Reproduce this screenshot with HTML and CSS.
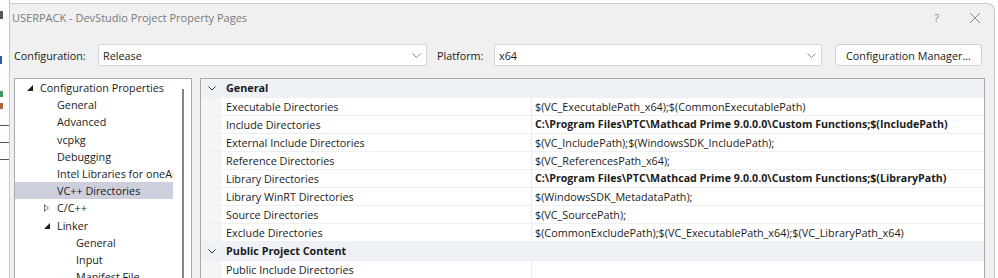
FILE: index.html
```html
<!DOCTYPE html>
<html lang="en">
<head>
    <meta charset="UTF-8">
    <title>USERPACK - DevStudio Project Property Pages</title>
    <link rel="stylesheet" href="styles.css">
</head>
<body>
<div class="desk">

    <div class="editor-strip">
        <span class="frag frag-dark"></span>
        <span class="frag frag-blue"></span>
        <span class="frag frag-green"></span>
        <span class="frag frag-brown"></span>
        <span class="frag-line"></span>
        <span class="frag-line"></span>
        <span class="frag-line"></span>
    </div>

    <div class="dialog">
        <div class="titlebar">
            <span class="title">USERPACK - DevStudio Project Property Pages</span>
            <span class="help-btn">?</span>
            <svg class="close-btn" width="12" height="12" viewBox="0 0 12 12"><path d="M1 1L11 11M11 1L1 11" stroke="#8a8a8a" stroke-width="1"/></svg>
        </div>

        <div class="config-row">
            <span class="cfg-label">Configuration:</span>
            <div class="combo combo-config">
                <span>Release</span>
                <svg width="9" height="5" viewBox="0 0 9 5"><path d="M0.5 0.5L4.5 4.5L8.5 0.5" fill="none" stroke="#8c8c8c"/></svg>
            </div>
            <span class="cfg-label platform-label">Platform:</span>
            <div class="combo combo-platform">
                <span>x64</span>
                <svg width="9" height="5" viewBox="0 0 9 5"><path d="M0.5 0.5L4.5 4.5L8.5 0.5" fill="none" stroke="#8c8c8c"/></svg>
            </div>
            <button class="cfg-manager">Configuration Manager...</button>
        </div>

        <div class="panes">
            <div class="tree">
                <div class="tree-list">
                    <div class="node lvl0"><span class="exp open"></span>Configuration Properties</div>
                    <div class="node lvl1">General</div>
                    <div class="node lvl1">Advanced</div>
                    <div class="node lvl1">vcpkg</div>
                    <div class="node lvl1">Debugging</div>
                    <div class="node lvl1">Intel Libraries for oneAPI</div>
                    <div class="node lvl1 selected">VC++ Directories</div>
                    <div class="node lvl1 has-exp"><span class="exp closed"></span>C/C++</div>
                    <div class="node lvl1 has-exp"><span class="exp open"></span>Linker</div>
                    <div class="node lvl2">General</div>
                    <div class="node lvl2">Input</div>
                    <div class="node lvl2">Manifest File</div>
                </div>
                <div class="tree-scroll"><div class="thumb"></div></div>
            </div>

            <div class="grid">
                <div class="row cat">
                    <span class="gutter"><svg width="8" height="5" viewBox="0 0 8 5"><path d="M0.5 0.5L4 4L7.5 0.5" fill="none" stroke="#333"/></svg></span>
                    <span class="name">General</span>
                </div>
                <div class="row"><span class="gutter"></span><span class="name">Executable Directories</span><span class="value">$(VC_ExecutablePath_x64);$(CommonExecutablePath)</span></div>
                <div class="row"><span class="gutter"></span><span class="name">Include Directories</span><span class="value bold">C:\Program Files\PTC\Mathcad Prime 9.0.0.0\Custom Functions;$(IncludePath)</span></div>
                <div class="row"><span class="gutter"></span><span class="name">External Include Directories</span><span class="value">$(VC_IncludePath);$(WindowsSDK_IncludePath);</span></div>
                <div class="row"><span class="gutter"></span><span class="name">Reference Directories</span><span class="value">$(VC_ReferencesPath_x64);</span></div>
                <div class="row"><span class="gutter"></span><span class="name">Library Directories</span><span class="value bold">C:\Program Files\PTC\Mathcad Prime 9.0.0.0\Custom Functions;$(LibraryPath)</span></div>
                <div class="row"><span class="gutter"></span><span class="name">Library WinRT Directories</span><span class="value">$(WindowsSDK_MetadataPath);</span></div>
                <div class="row"><span class="gutter"></span><span class="name">Source Directories</span><span class="value">$(VC_SourcePath);</span></div>
                <div class="row"><span class="gutter"></span><span class="name">Exclude Directories</span><span class="value">$(CommonExcludePath);$(VC_ExecutablePath_x64);$(VC_LibraryPath_x64)</span></div>
                <div class="row cat">
                    <span class="gutter"><svg width="8" height="5" viewBox="0 0 8 5"><path d="M0.5 0.5L4 4L7.5 0.5" fill="none" stroke="#333"/></svg></span>
                    <span class="name">Public Project Content</span>
                </div>
                <div class="row"><span class="gutter"></span><span class="name">Public Include Directories</span><span class="value"></span></div>
            </div>
        </div>
    </div>

</div>
</body>
</html>
```
FILE: styles.css
```css
*{
    box-sizing: border-box;
}
body{
    margin: 0;
    background: #ffffff;
    font-family: "Open Sans", "Noto Sans", sans-serif;
    font-size: 10.8px;
    color: #1b1b1b;
    overflow: hidden;
}
.desk{
    display: flex;
    height: 278px;
}

/* bit of the editor behind the dialog */
.editor-strip{
    width: 10px;
    flex: none;
    display: flex;
    flex-direction: column;
    background: #fdfdfd;
    overflow: hidden;
    border-right: 1px solid #c9c9c9;
}
.frag{
    display: block;
    width: 3px;
    height: 8px;
}
.frag-dark{ background: #555; margin-top: 11px; }
.frag-blue{ background: #2b5aa8; margin-top: 37px; width: 2px; }
.frag-green{ background: #3d9a63; margin-top: 27px; height: 6px; }
.frag-brown{ background: #a8683a; margin-top: 6px; height: 6px; }
.frag-line{
    display: block;
    height: 1px;
    width: 9px;
    background: #555;
    margin-top: 16px;
}

.dialog{
    flex: 1;
    margin-top: 3px;
    margin-right: 3px;
    background: #f0f0f0;
    border-top: 1px solid #c9c9c9;
    border-right: 1px solid #c9c9c9;
    border-top-right-radius: 8px;
    display: flex;
    flex-direction: column;
    overflow: hidden;
}

.titlebar{
    display: flex;
    align-items: center;
    height: 27px;
    padding: 0 0 0 2px;
    flex: none;
}
.title{
    flex: 1;
    color: #7a7a7a;
    font-size: 11px;
}
.help-btn{
    color: #8a8a8a;
    font-size: 11px;
    margin-right: 30px;
}
.close-btn{
    margin-right: 13px;
}

.config-row{
    display: flex;
    align-items: center;
    height: 22px;
    margin-top: 13px;
    padding-left: 4px;
    flex: none;
}
.cfg-label{
    width: 84px;
    flex: none;
}
.platform-label{
    width: 57px;
    margin-left: 10px;
}
.combo{
    height: 22px;
    background: #ffffff;
    border: 1px solid #d6d6d6;
    display: flex;
    align-items: center;
    justify-content: space-between;
    padding: 0 5px 0 4px;
    flex: none;
}
.combo svg{
    margin-top: 1px;
}
.combo-config{
    width: 329px;
}
.combo-platform{
    width: 328px;
}
.cfg-manager{
    margin-left: 13px;
    width: 147px;
    height: 22px;
    background: #fdfdfd;
    border: 1px solid #d0d0d0;
    border-radius: 4px;
    font: inherit;
    color: #1b1b1b;
    padding: 0;
}

.panes{
    display: flex;
    margin-top: 12px;
    flex: 1;
    min-height: 0;
    padding-left: 4px;
}

.tree{
    width: 178px;
    flex: none;
    background: #ffffff;
    border: 1px solid #a9a9a9;
    border-bottom: none;
    display: flex;
}
.tree-list{
    flex: 1;
    overflow: hidden;
}
.node{
    height: 17.2px;
    line-height: 17.2px;
    white-space: nowrap;
    position: relative;
}
.lvl0{ padding-left: 25px; }
.lvl1{ padding-left: 42px; }
.lvl2{ padding-left: 61px; }
.node.selected{
    background: #cdd0dc;
}
.exp{
    position: absolute;
    top: 6px;
}
.lvl0 .exp{ left: 12px; }
.lvl1 .exp{ left: 29px; }
.exp.open{
    width: 0;
    height: 0;
    border-left: 6px solid transparent;
    border-bottom: 6px solid #1e1e1e;
}
.exp.closed{
    top: 5px;
    width: 0;
    height: 0;
    border-top: 4px solid transparent;
    border-bottom: 4px solid transparent;
    border-left: 5px solid #6e6e6e;
}
.exp.closed::after{
    content: "";
    position: absolute;
    left: -4px;
    top: -2.6px;
    border-top: 2.6px solid transparent;
    border-bottom: 2.6px solid transparent;
    border-left: 3.2px solid #ffffff;
}
.tree-scroll{
    width: 18px;
    flex: none;
    display: flex;
    justify-content: center;
    padding-top: 10px;
}
.thumb{
    width: 2px;
    height: 100%;
    background: #858585;
    margin-left: 2px;
}

.grid{
    width: 785px;
    margin-left: 8px;
    flex: none;
    background: #ffffff;
    border: 1px solid #a9a9a9;
    border-bottom: none;
    position: relative;
}
.grid::after{
    content: "";
    position: absolute;
    left: 330px;
    top: 0;
    bottom: 0;
    width: 1px;
    background: #ececec;
}
.row{
    display: flex;
    height: 18px;
    line-height: 17px;
    border-bottom: 1px solid #f0f0f0;
    white-space: nowrap;
}
.row.cat{
    height: 19px;
    line-height: 18px;
    background: #eef1f6;
    font-weight: 700;
    position: relative;
    z-index: 1;
}
.gutter{
    width: 21px;
    flex: none;
    background: #f4f5f7;
    display: flex;
    align-items: center;
    justify-content: center;
}
.cat .gutter{
    background: transparent;
    padding-left: 1px;
}
.name{
    width: 310px;
    flex: none;
    padding-left: 4px;
    overflow: hidden;
}
.cat .name{
    width: auto;
}
.value{
    flex: 1;
    padding-left: 3px;
    overflow: hidden;
}
.value.bold{
    font-weight: 700;
    font-size: 10.65px;
}
```
